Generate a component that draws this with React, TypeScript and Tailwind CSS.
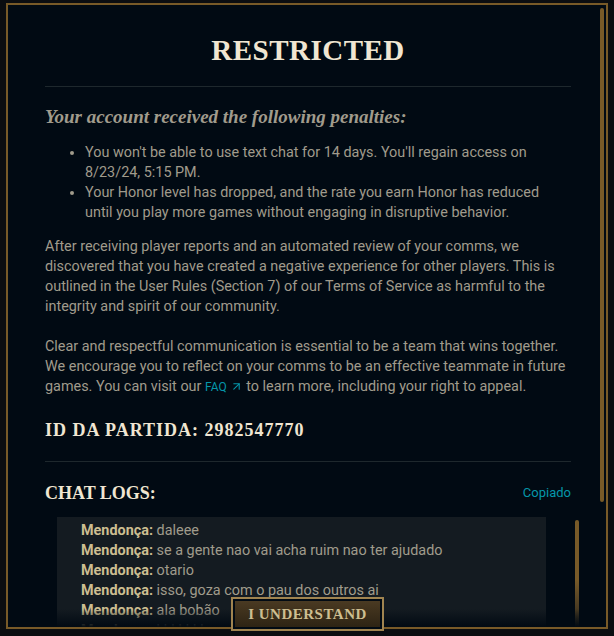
import { ArrowUpRight } from "lucide-react"

const serif = { fontFamily: '"Liberation Serif", "Times New Roman", serif' }

const chatLines = [
  { name: "Mendonça:", text: "daleee" },
  { name: "Mendonça:", text: "se a gente nao vai acha ruim nao ter ajudado" },
  { name: "Mendonça:", text: "otario" },
  { name: "Mendonça:", text: "isso, goza com o pau dos outros ai" },
  { name: "Mendonça:", text: "ala bobão" },
  { name: "Mendonça:", text: "kkkkkkk" },
]

export default function App() {
  return (
    <div
      className="w-[614px] h-[636px] overflow-hidden bg-[#0b0d10] pt-[3px] pl-[6px]"
      style={{ fontFamily: 'Roboto, "Liberation Sans", Arial, sans-serif' }}
    >
      <div className="relative w-[602px] h-[626px] border-2 border-[#785a28] bg-[#010a13]">
        <div className="h-full overflow-hidden pl-[37px] pr-[35px] pt-[31px]">
          <h1
            className="text-center text-[29px] leading-[29px] font-bold tracking-[0.5px] text-[#f0e6d2]"
            style={serif}
          >
            RESTRICTED
          </h1>
          <div className="mt-[21px] h-px bg-[#1e282d]" />

          <h2
            className="mt-[18px] text-[19px] leading-[24px] font-bold italic text-[#a09b8c]"
            style={serif}
          >
            Your account received the following penalties:
          </h2>

          <ul className="mt-[14px] list-disc pl-[40px] pr-[20px] text-[14.4px] leading-[20px] text-[#a09b8c]">
            <li>You won't be able to use text chat for 14 days. You'll regain access on 8/23/24, 5:15 PM.</li>
            <li>
              Your Honor level has dropped, and the rate you earn Honor has reduced until you play more games
              without engaging in disruptive behavior.
            </li>
          </ul>

          <p className="mt-[14px] text-[14.4px] leading-[20px] text-[#a09b8c]">
            After receiving player reports and an automated review of your comms, we discovered that you have
            created a negative experience for other players. This is outlined in the User Rules (Section 7) of our
            Terms of Service as harmful to the integrity and spirit of our community.
          </p>
          <p className="mt-[20px] text-[14.4px] leading-[20px] text-[#a09b8c]">
            Clear and respectful communication is essential to be a team that wins together. We encourage you to
            reflect on your comms to be an effective teammate in future games. You can visit our{" "}
            <span className="text-[12px] text-[#0596aa]">
              FAQ{" "}
              <ArrowUpRight size={13} strokeWidth={2} className="inline-block align-[-2px]" />
            </span>{" "}
            to learn more, including your right to appeal.
          </p>

          <div
            className="mt-[21px] text-[18px] leading-[24px] font-bold tracking-[1px] text-[#f0e6d2]"
            style={serif}
          >
            ID DA PARTIDA: 2982547770
          </div>
          <div className="mt-[19px] h-px bg-[#1e282d]" />

          <div className="mt-[19px] flex items-center justify-between">
            <span className="text-[18px] leading-[24px] font-bold text-[#f0e6d2]" style={serif}>
              CHAT LOGS:
            </span>
            <span className="text-[13px] text-[#0596aa]">Copiado</span>
          </div>

          <div className="mt-[12px] ml-[12px] flex">
            <div className="w-[489px] shrink-0 bg-[#141b21] pl-[24px] pt-[4px] pb-[20px] text-[14.4px] leading-[20px]">
              {chatLines.map((line, i) => (
                <div key={i} className="text-[#a09b8c]">
                  <span className="font-bold text-[#cdbe91]">{line.name}</span> {line.text}
                </div>
              ))}
            </div>
            <div className="ml-[29px] mt-[3px] w-[4px] h-[120px] shrink-0 rounded-full bg-gradient-to-b from-[#785a28] via-[#785a28] to-[#1a1a16]" />
          </div>
        </div>

        {/* outer scrollbar */}
        <div className="absolute left-[592px] top-[3px] w-[4px] h-[494px] rounded-full bg-[#785a28]" />

        {/* bottom fade */}
        <div className="absolute left-0 right-0 bottom-0 h-[18px] bg-gradient-to-t from-[#010a13] to-transparent" />

        {/* button */}
        <div className="absolute left-[223px] top-[592px] h-[34px] w-[153px] border-2 border-[#a08450] bg-[#010a13] p-[2px]">
          <div
            className="flex h-full items-center justify-center bg-gradient-to-b from-[#4a3a22] to-[#2e2414] text-[15px] font-bold tracking-[0.5px] text-[#cdbe91]"
            style={serif}
          >
            I UNDERSTAND
          </div>
        </div>
      </div>
    </div>
  )
}
